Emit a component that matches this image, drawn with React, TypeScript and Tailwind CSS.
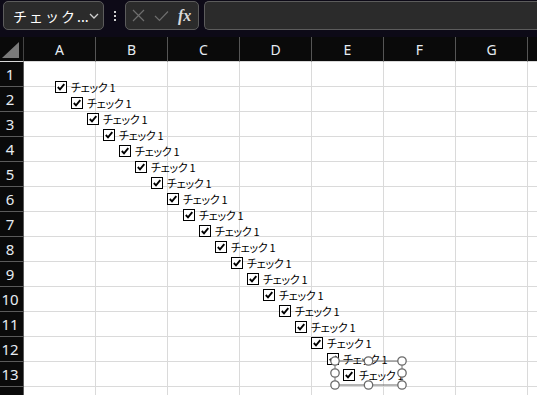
import React from "react";

const COLS = ["A", "B", "C", "D", "E", "F", "G", ""];
const ROWS = Array.from({ length: 14 }, (_, i) => i + 1);
const CHECKS = Array.from({ length: 19 }, (_, i) => i);

function CheckBox() {
  return (
    <span className="w-[12px] h-[12px] border border-black bg-white flex items-center justify-center shrink-0">
      <svg width="10" height="10" viewBox="0 0 10 10">
        <path d="M1.8 5 L4 7.3 L8.3 2.2" fill="none" stroke="#000" strokeWidth="1.9" />
      </svg>
    </span>
  );
}

export default function App() {
  return (
    <div className="relative w-[537px] h-[395px] overflow-hidden bg-[#0d0a17] font-['Noto_Sans','Noto_Sans_CJK_JP',sans-serif]">
      {/* Top bar */}
      <div className="flex items-start h-[37px] pt-[1px] pl-[3px]">
        <div className="w-[101px] h-[29px] rounded-[5px] border border-[#5c5c5c] bg-[#2b2b2b] flex items-center pl-[9px] pr-[5px]">
          <span className="flex-1 whitespace-nowrap text-[14px] text-white font-['Noto_Sans_CJK_JP',sans-serif] leading-none">
            <span className="tracking-[2px]">チェック</span>
            <span className="tracking-[0px]">...</span>
          </span>
          <svg width="10" height="6" viewBox="0 0 10 6" className="shrink-0">
            <path d="M1 1 L5 5 L9 1" fill="none" stroke="#cfcfcf" strokeWidth="1.3" />
          </svg>
        </div>
        <div className="w-[21px] h-[29px] flex flex-col items-center justify-center gap-[2px]">
          <span className="w-[2px] h-[2px] bg-[#d0d0d0]" />
          <span className="w-[2px] h-[2px] bg-[#d0d0d0]" />
          <span className="w-[2px] h-[2px] bg-[#d0d0d0]" />
        </div>
        <div className="w-[74px] h-[29px] rounded-[5px] border border-[#5c5c5c] bg-[#2b2b2b] flex items-center pl-[6px] gap-[9px]">
          <svg width="13" height="13" viewBox="0 0 13 13">
            <path d="M1 1 L12 12 M12 1 L1 12" stroke="#6e6e6e" strokeWidth="1.2" />
          </svg>
          <svg width="15" height="12" viewBox="0 0 15 12">
            <path d="M1 6 L5.5 10.5 L14 1.5" fill="none" stroke="#6e6e6e" strokeWidth="1.2" />
          </svg>
          <span className="text-[16px] italic font-bold text-[#d8d8d8] font-['Liberation_Serif',serif] leading-none">fx</span>
        </div>
        <div className="flex-1 ml-[5px] h-[29px] rounded-l-[5px] border border-r-0 border-[#5c5c5c] bg-[#2b2b2b]" />
      </div>

      {/* Sheet grid */}
      <div className="grid grid-cols-[24px_repeat(8,72px)] grid-rows-[25px_repeat(14,25px)]">
        <div className="bg-[#0a0a0a] border-r border-[#444] border-b border-b-[#d9d9d9] flex items-end justify-end pr-[4px] pb-[3px]">
          <svg width="17" height="16" viewBox="0 0 17 16">
            <path d="M17 0 L17 16 L0 16 Z" fill="#7a7a7a" />
          </svg>
        </div>
        {COLS.map((c, i) => (
          <div
            key={i}
            className="bg-[#0a0a0a] border-r border-[#555] border-b border-b-[#d9d9d9] flex items-center justify-center text-[14px] text-[#e6ecf2]"
          >
            {c}
          </div>
        ))}
        {ROWS.map((r) => (
          <React.Fragment key={r}>
            <div className="bg-[#0a0a0a] border-r border-b border-[#5a5a5a] flex items-start justify-center pt-[2px] pr-[3px] text-[15px] leading-[20px] text-[#e6ecf2]">
              {r}
            </div>
            {COLS.map((c, i) => (
              <div key={i} className="bg-white border-r border-b border-[#dadada]" />
            ))}
          </React.Fragment>
        ))}
      </div>

      {/* Form controls floating on the sheet */}
      {CHECKS.map((i) => (
        <div
          key={i}
          className="absolute flex items-center gap-[4px] h-[12px]"
          style={{ left: 55 + 16 * i, top: 81 + 16 * i }}
        >
          <CheckBox />
          <span className="text-[11px] leading-none text-black font-['Noto_Sans_CJK_JP',sans-serif] [font-feature-settings:'palt'] tracking-[-0.3px] whitespace-nowrap">
            チェック 1
          </span>
        </div>
      ))}

      {/* Selection handles of the last control */}
      <svg className="absolute left-[328px] top-[354px]" width="82" height="38" viewBox="0 0 82 38">
        <rect x="7" y="7" width="67" height="24" fill="none" stroke="#6a6a6a" strokeWidth="1" />
        {[7, 40.5, 74].map((x) =>
          [7, 19, 31].map((y) =>
            x === 40.5 && y === 19 ? null : (
              <circle key={`${x}-${y}`} cx={x} cy={y} r="4.2" fill="#fff" stroke="#6a6a6a" strokeWidth="1.3" />
            )
          )
        )}
      </svg>
    </div>
  );
}
